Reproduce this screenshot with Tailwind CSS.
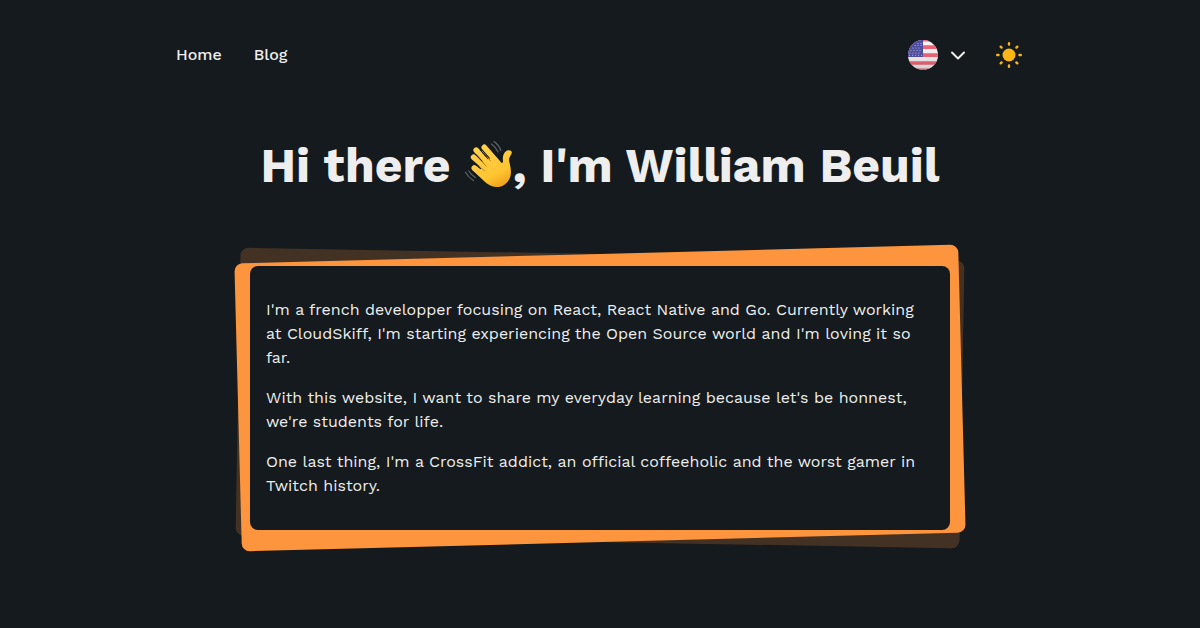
<!DOCTYPE html>
<html lang="en">
<head>
<meta charset="utf-8">
<meta name="viewport" content="width=device-width, initial-scale=1">
<title>William Beuil</title>
<script src="https://cdn.jsdelivr.net/npm/@tailwindcss/browser@4"></script>
</head>
<body class="min-h-screen bg-[#141a1d] font-['Work_Sans','Inter',sans-serif] text-base text-[#eeeeee] antialiased">
<header class="mx-auto flex max-w-[880px] items-center justify-between px-4 pt-10">
  <nav class="flex gap-8 font-medium">
    <a href="#home">Home</a>
    <a href="#blog">Blog</a>
  </nav>
  <div class="flex items-center gap-7">
    <button type="button" aria-label="Choose language" class="flex items-center gap-3">
      <svg class="size-[30px]" viewBox="0 0 30 30" aria-hidden="true">
        <defs>
          <clipPath id="disc"><circle cx="15" cy="15" r="15"/></clipPath>
          <linearGradient id="shade" x2="0" y2="1"><stop offset="0" stop-color="#fff" stop-opacity=".05"/><stop offset="1" stop-color="#555" stop-opacity=".25"/></linearGradient>
        </defs>
        <g clip-path="url(#disc)">
          <path fill="#faf4f5" d="M0 0h30v30H0z"/>
          <path fill="#f0566a" d="M0 5.300h30v3.700H0zM0 13.200h30V17H0zM0 21.200h30v3.600H0zM0 28.500h30V30H0zM15 0h15v1.500H15z"/>
          <path fill="#403f9c" d="M0 0h15v17H0z"/>
          <path stroke="#b4b3dc" stroke-width="1.200" stroke-linecap="round" stroke-dasharray="0 3" d="M10 3.300h4M7 5.500h7M5 8h9M3 10.500h11M2 13h12M1.500 15.300H14" fill="none"/>
          <path fill="url(#shade)" d="M0 0h30v30H0z"/>
        </g>
      </svg>
      <svg class="size-4" viewBox="0 0 16 16" fill="none" stroke="#eeeeee" stroke-width="2" stroke-linecap="round" stroke-linejoin="round" aria-hidden="true"><path d="m2 5.500 6 6 6-6"/></svg>
    </button>
    <button type="button" aria-label="Switch to light theme">
      <svg class="size-[30px]" viewBox="0 0 30 30" fill="#fbb516" aria-hidden="true">
        <circle cx="15" cy="15" r="6.500"/>
        <path stroke="#fbb516" stroke-width="2.400" stroke-linecap="round" d="M15 3.200v1.300M15 25.500v1.300M3.200 15h1.300M25.500 15h1.300M6.700 6.700l.9.9M22.400 22.400l.9.9M6.700 23.300l.9-.9M22.400 7.600l.9-.9"/>
      </svg>
    </button>
  </div>
</header>
<main class="mx-auto max-w-[732px] px-4 pt-16">
  <h1 class="flex items-center justify-center whitespace-nowrap text-5xl leading-[64px] font-bold">
    <span>Hi there</span>
    <svg class="ml-3 size-[50px] shrink-0" viewBox="3 6 50 50" role="img" aria-label="Waving hand">
      <defs>
        <linearGradient id="skin" gradientUnits="userSpaceOnUse" x1="22" y1="14" x2="42" y2="53"><stop offset="0" stop-color="#ffd04a"/><stop offset=".65" stop-color="#ffc532"/><stop offset="1" stop-color="#ed9d18"/></linearGradient>
      </defs>
      <g fill="none" stroke="url(#skin)" stroke-linecap="round" stroke-width="5.600">
        <path d="M24.300 12.300 38 28"/>
        <path d="M16.200 15.200 30 31"/>
        <path d="M13.600 22.300 27 35"/>
        <path d="M14.300 33 25 41.500"/>
      </g>
      <path fill="url(#skin)" d="M22.500 33 28 24.500 34.500 20.500 40.600 27.300C42 28.600 42.900 28 43 26.300 42.300 21.500 43.600 17.300 46.700 15.700 49.700 14.500 52.500 16 51.600 18.400 50.200 21.400 48.600 22.600 49.200 26.500 50.500 32 51.600 36 50.500 41 49 47.300 43 52.300 36.200 52.100 31.500 51.800 28 49.500 24 46L12.600 35.300 16.500 31.500 20 34.500Z"/>
      <path fill="none" stroke="#c98516" stroke-width="1" stroke-linecap="round" d="m22 16 8.500 9.800M18.500 23l7.700 8.200M18 30.200l6.500 5.600"/>
      <path fill="none" stroke="#141a1d" stroke-width="1" stroke-linecap="round" d="m20.600 15.400 5.800 6.600M15.700 19.200l6.300 6.700M14 26.800l5 4.500"/>
      <path fill="none" stroke="#5f6467" stroke-width="1.200" stroke-linecap="round" d="M31.500 9c3 2.200 5.200 4.600 6.500 8M34 6.500c3.500 2.500 5.700 5.400 6.800 9M8.800 36c1.700 2.700 3.700 4.700 6.500 6.400M5.500 37.200c2 3.600 4.600 6.300 8 8.300"/>
    </svg>
    <span>, I'm William Beuil</span>
  </h1>
  <section class="relative isolate mt-[68px]">
    <div class="absolute -inset-3 -z-10 rotate-[1deg] rounded-lg bg-[#fd953e]/20"></div>
    <div class="absolute -inset-3 -z-10 -rotate-[1.5deg] rounded-lg bg-[#fd953e]"></div>
    <div class="space-y-4 rounded-lg bg-[#141a1d] px-4 py-8 leading-6">
      <p>I'm a french developper focusing on React, React Native and Go. Currently working at CloudSkiff, I'm starting experiencing the Open Source world and I'm loving it so far.</p>
      <p>With this website, I want to share my everyday learning because let's be honnest, we're students for life.</p>
      <p>One last thing, I'm a CrossFit addict, an official coffeeholic and the worst gamer in Twitch history.</p>
    </div>
  </section>
</main>
</body>
</html>
